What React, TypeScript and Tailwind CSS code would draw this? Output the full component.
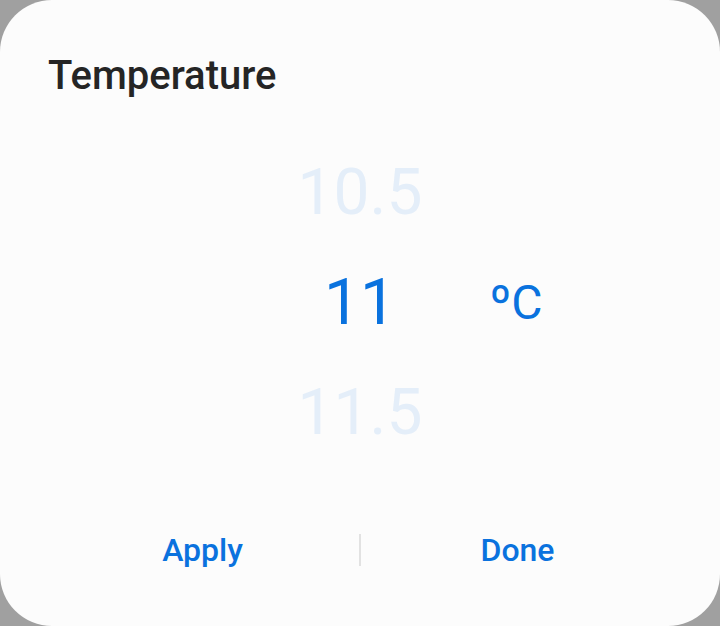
import React from "react";

export default function App() {
  const font = { fontFamily: "Roboto, 'Noto Sans', sans-serif" };
  return (
    <div className="w-[720px] h-[626px] bg-[#a0a0a0]" style={font}>
      <div className="w-full h-full rounded-[52px] bg-[#fcfcfc] flex flex-col">
        <div className="pl-[48px] pt-[52px] h-[138px] text-[40px] font-medium text-[#252525] leading-[48px]">
          Temperature
        </div>
        <div className="flex h-[330px]">
          <div className="w-[260px]" />
          <div className="w-[200px] flex flex-col items-center">
            <div className="h-[110px] flex items-center text-[64px] font-normal text-[#e4eef9] leading-none">10.5</div>
            <div className="h-[110px] flex items-center text-[64px] font-normal text-[#0a72de] leading-none">11</div>
            <div className="h-[110px] flex items-center text-[64px] font-normal text-[#e4eef9] leading-none">11.5</div>
          </div>
          <div className="w-[112px] flex flex-col">
            <div className="h-[110px]" />
            <div className="h-[110px] flex items-center justify-center text-[48px] text-[#0a72de] leading-none">ºC</div>
          </div>
        </div>
        <div className="flex items-center px-[46px] mt-[50px] h-[64px]">
          <div className="flex-1 text-center text-[32px] font-medium text-[#0a72de]">Apply</div>
          <div className="w-[2px] h-[32px] bg-[#e2e2e2]" />
          <div className="flex-1 text-center text-[32px] font-medium text-[#0a72de]">Done</div>
        </div>
      </div>
    </div>
  );
}
